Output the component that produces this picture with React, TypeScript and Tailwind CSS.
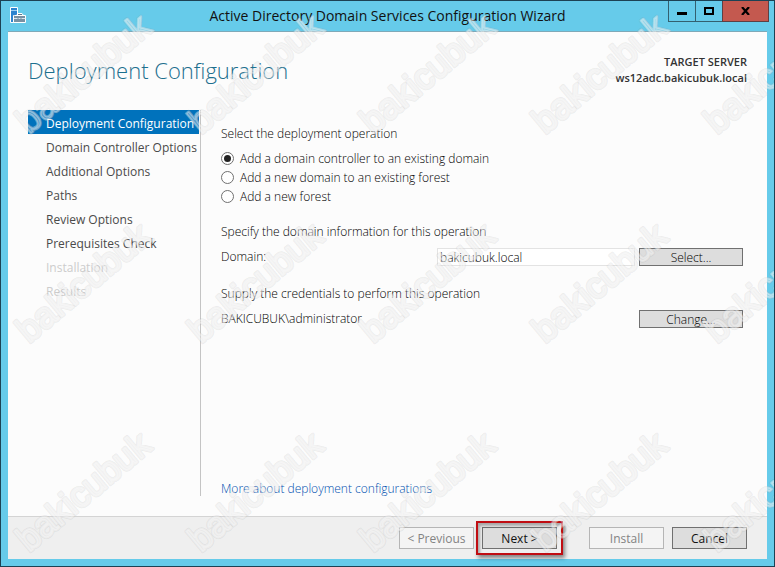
import { useState } from "react";

type StepState = "current" | "open" | "disabled";

const STEPS: { label: string; state: StepState }[] = [
  { label: "Deployment Configuration", state: "current" },
  { label: "Domain Controller Options", state: "open" },
  { label: "Additional Options", state: "open" },
  { label: "Paths", state: "open" },
  { label: "Review Options", state: "open" },
  { label: "Prerequisites Check", state: "open" },
  { label: "Installation", state: "disabled" },
  { label: "Results", state: "disabled" },
];

const OPERATIONS = [
  { id: "existing-domain", label: "Add a domain controller to an existing domain" },
  { id: "new-domain", label: "Add a new domain to an existing forest" },
  { id: "new-forest", label: "Add a new forest" },
];

const STEP_CLASS: Record<StepState, string> = {
  current: "bg-[#0072bc] text-white",
  open: "text-[#4a4a4a]",
  disabled: "text-[#cccccc]",
};

export default function App() {
  const [operation, setOperation] = useState("existing-domain");
  const [domain, setDomain] = useState("bakicubuk.local");

  return (
    <div className="relative flex min-h-screen flex-col overflow-hidden border border-[#1c4254] bg-[#66cbea] px-[7px] pb-[7px] font-['Open_Sans','Noto_Sans',sans-serif] text-xs text-[#111]">
      <TitleBar />

      <main className="flex flex-1 flex-col border-t border-[#7fa9b8] bg-[#fcfcfc]">
        <header className="flex items-start justify-between pt-5 pr-5 pl-5">
          <h1 className="text-[22px] leading-9 font-light text-[#1c6f8e]">Deployment Configuration</h1>
          <div className="pt-0.5 text-right text-[11px] leading-4 font-semibold text-[#333]">
            <p>TARGET SERVER</p>
            <p>ws12adc.bakicubuk.local</p>
          </div>
        </header>

        <div className="flex flex-1 pt-[22px] pr-6 pb-5 pl-5">
          <nav className="w-[173px] shrink-0 border-r border-[#c4c4c4]">
            <ol>
              {STEPS.map((s) => (
                <li key={s.label} className="pr-px">
                  <button
                    disabled={s.state === "disabled"}
                    aria-current={s.state === "current" ? "step" : undefined}
                    className={`block h-6 w-full pt-0.5 pl-[18px] text-left leading-6 whitespace-nowrap ${STEP_CLASS[s.state]}`}
                  >
                    {s.label}
                  </button>
                </li>
              ))}
            </ol>
          </nav>

          <div className="flex flex-1 flex-col pt-4 pl-5 font-light text-black">
            <fieldset>
              <legend className="leading-4">Select the deployment operation</legend>
              <div className="flex flex-col pt-[7px]">
                {OPERATIONS.map((o) => (
                  <label key={o.id} className="flex h-[19px] items-center gap-[6px]">
                    <input
                      type="radio"
                      name="operation"
                      checked={operation === o.id}
                      onChange={() => setOperation(o.id)}
                      className="grid h-[13px] w-[13px] appearance-none place-items-center rounded-full border border-[#707070] bg-white before:hidden before:h-[7px] before:w-[7px] before:rounded-full before:bg-[#222] checked:before:block"
                    />
                    {o.label}
                  </label>
                ))}
              </div>
            </fieldset>

            <h2 className="pt-[18px] leading-4">Specify the domain information for this operation</h2>
            <div className="flex items-center pt-2">
              <label htmlFor="domain" className="w-[216px] leading-4">
                Domain:
              </label>
              <input
                id="domain"
                value={domain}
                onChange={(e) => setDomain(e.target.value)}
                className="h-[18px] min-w-0 flex-1 border border-[#e3e3e3] bg-white px-0.5"
              />
              <SmallButton>Select...</SmallButton>
            </div>

            <h2 className="pt-5 leading-4">Supply the credentials to perform this operation</h2>
            <div className="flex items-center justify-between pt-2">
              <p className="leading-4">BAKICUBUK\administrator</p>
              <SmallButton>Change...</SmallButton>
            </div>

            <a href="#more" className="mt-auto self-start leading-[14px] text-[#0050b0]">
              More about deployment configurations
            </a>
          </div>
        </div>

        <footer className="flex justify-end gap-2 border-t border-[#d4d4d4] bg-[#efefef] pt-[10px] pr-5 pb-[10px]">
          <FooterButton disabled>&lt; Previous</FooterButton>
          <div className="relative mr-6">
            <FooterButton>Next &gt;</FooterButton>
            <span className="pointer-events-none absolute -inset-[6px] border-2 border-[#c00d12] shadow-[2px_3px_4px_rgba(0,0,0,0.45),inset_2px_3px_3px_rgba(0,0,0,0.3)]" />
          </div>
          <FooterButton disabled>Install</FooterButton>
          <FooterButton>Cancel</FooterButton>
        </footer>
      </main>

      <Watermark />
    </div>
  );
}

function TitleBar() {
  return (
    <div className="grid h-[30px] grid-cols-[101px_1fr_101px] items-start">
      <svg width="18" height="18" viewBox="0 0 18 18" className="mt-[5px] ml-px" aria-hidden="true">
        <path d="M1.500 1.500h7v15h-7z" fill="#2b84cf" stroke="#fff" />
        <path d="M2 4.500h6" stroke="#9fd0f2" />
        <path d="M5.500 9.500h11v7h-12v-7z" fill="#7891a3" stroke="#fff" />
        <path d="M7.500 9.500L9 7.500h4L14.500 9.500" fill="none" stroke="#fff" />
        <path d="M9 8.500h4" stroke="#5d788b" />
        <path d="M5 12.500h3.500M9.500 12.500h2M12.500 12.500h4" fill="none" stroke="#dbe6ee" />
      </svg>
      <div className="text-center text-sm leading-[30px] whitespace-nowrap text-[#111]">
        Active Directory Domain Services Configuration Wizard
      </div>
      <div className="-mr-0.5 flex h-[21px] justify-end">
        <button aria-label="Minimize" className="grid w-7 place-items-center border-x border-b border-[#33606f]">
          <svg width="10" height="10" viewBox="0 0 10 10">
            <path d="M0 6h10v3H0z" fill="#000" />
          </svg>
        </button>
        <button aria-label="Maximize" className="grid w-[26px] place-items-center border-b border-[#33606f]">
          <svg width="10" height="8" viewBox="0 0 10 8">
            <path d="M1 1h8v6H1z" fill="none" stroke="#000" strokeWidth="2" />
          </svg>
        </button>
        <button
          aria-label="Close"
          className="grid w-[47px] place-items-center border-x border-b border-[#5f3f43] bg-[#c4594f]"
        >
          <svg width="9" height="8" viewBox="0 0 9 8">
            <path d="M1 0l7 8M8 0L1 8" stroke="#000" strokeWidth="2.200" />
          </svg>
        </button>
      </div>
    </div>
  );
}

function SmallButton({ children }: { children: React.ReactNode }) {
  return (
    <button className="ml-1 h-[18px] w-[104px] shrink-0 border border-[#707070] bg-[#dddddd] pt-px leading-4">
      {children}
    </button>
  );
}

function FooterButton({ children, disabled }: { children: React.ReactNode; disabled?: boolean }) {
  return (
    <button
      disabled={disabled}
      className={`block h-[22px] w-[75px] border pt-px leading-5 ${
        disabled ? "border-[#b5b5b5] bg-[#f4f4f4] text-[#838383]" : "border-[#707070] bg-[#dddddd]"
      }`}
    >
      {children}
    </button>
  );
}

// Site name tiled diagonally over the whole window
function Watermark() {
  const tiles = [0, 1, 2].flatMap((row) => [0, 1, 2, 3, 4].map((col) => ({ x: 28 + col * 172, y: 134 + row * 209 })));
  return (
    <svg
      className="pointer-events-none absolute inset-0 h-full w-full font-['Liberation_Sans',Arial,sans-serif] text-[36px] select-none"
      strokeLinejoin="round"
      aria-hidden="true"
    >
      {tiles.map((t) => (
        <g key={`${t.x}-${t.y}`} transform={`translate(${t.x} ${t.y}) rotate(-40)`}>
          <text fill="none" stroke="#808080" strokeOpacity="0.13" strokeWidth="3.500">
            bakicubuk
          </text>
          <text fill="#fff" fillOpacity="0.3" stroke="#fff" strokeOpacity="0.4" strokeWidth="2">
            bakicubuk
          </text>
        </g>
      ))}
    </svg>
  );
}
